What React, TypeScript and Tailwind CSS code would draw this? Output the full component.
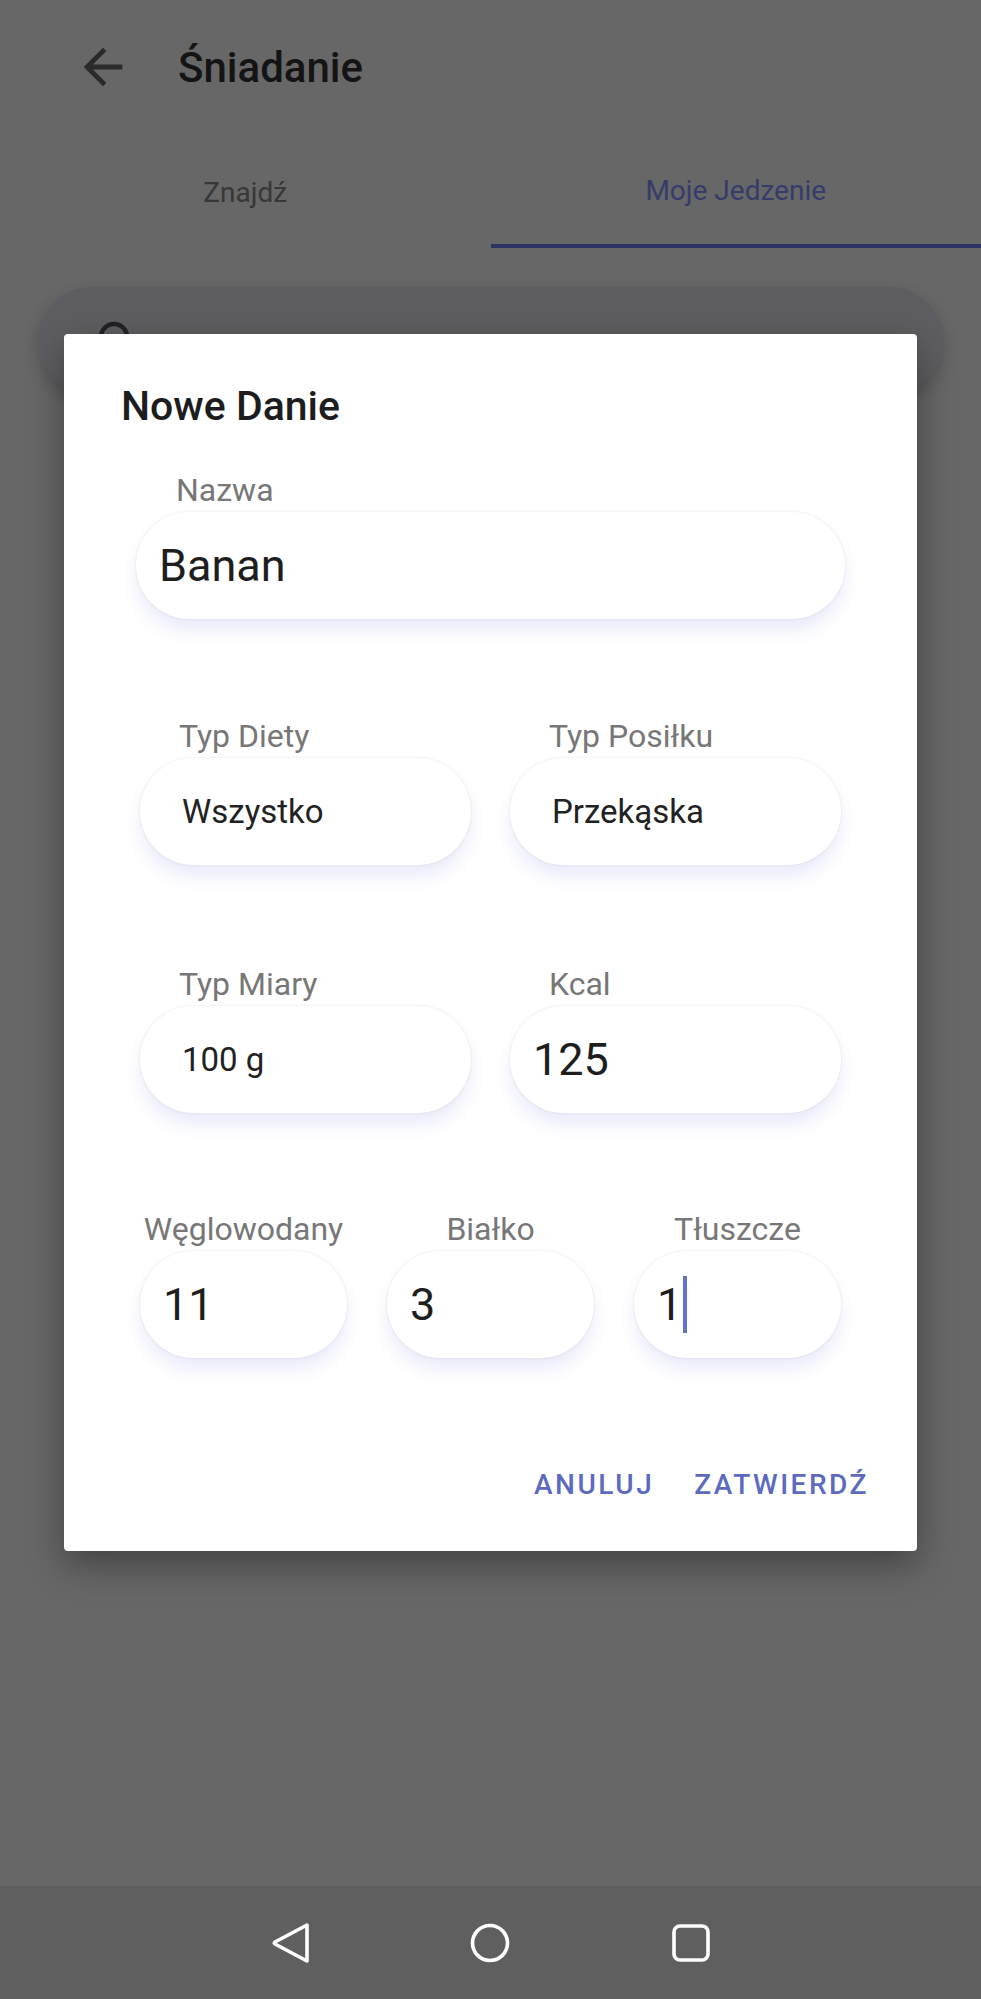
import React from "react";

const font = { fontFamily: "Roboto, 'Noto Sans', 'Liberation Sans', sans-serif" };

function Field({
    label,
    value,
    small,
    centerLabel,
    cursor,
    wide,
}: {
    label: string;
    value: string;
    small?: boolean;
    centerLabel?: boolean;
    cursor?: boolean;
    wide?: boolean;
}) {
    return (
        <div className="flex min-w-0 flex-1 flex-col">
            <div
                className={`h-[40px] text-[32px] leading-[40px] text-[#777777] ${centerLabel ? "text-center" : wide ? "pl-[40px]" : "pl-[39px]"}`}
            >
                {label}
            </div>
            <div
                className={`mt-[2px] flex h-[107px] items-center rounded-full bg-white shadow-[0_12px_16px_rgba(98,110,220,0.13),0_0_3px_rgba(0,0,0,0.09)] ${small ? "pl-[42px]" : "pl-[23px]"}`}
            >
                <span
                    className={
                        small
                            ? "text-[33px] text-[#222222]"
                            : "text-[45px] text-[#1e1e1e]"
                    }
                >
                    {value}
                </span>
                {cursor && (
                    <span className="ml-[1px] h-[57px] w-[4px] bg-[#6373c8]" />
                )}
            </div>
        </div>
    );
}

export default function App() {
    return (
        <div
            className="relative flex h-[1999px] w-[981px] flex-col overflow-hidden bg-[#676767]"
            style={font}
        >
            {/* toolbar */}
            <div className="flex h-[134px] items-center">
                <svg
                    viewBox="0 0 24 24"
                    className="ml-[74px] h-[58px] w-[58px] fill-[#2a2a2a]"
                >
                    <path d="M20 11H7.83l5.59-5.59L12 4l-8 8 8 8 1.41-1.41L7.83 13H20v-2z" />
                </svg>
                <span className="ml-[46px] text-[42px] font-medium text-[#141414]">
                    Śniadanie
                </span>
            </div>

            {/* tabs */}
            <div className="flex h-[114px]">
                <div className="flex flex-1 items-center justify-center pt-[4px] text-[28px] text-[#383838]">
                    Znajdź
                </div>
                <div className="flex flex-1 flex-col">
                    <div className="flex flex-1 items-center justify-center pt-[4px] text-[28px] text-[#363c6a]">
                        Moje Jedzenie
                    </div>
                    <div className="h-[4px] bg-[#2c3262]" />
                </div>
            </div>

            {/* search bar behind the dialog */}
            <div className="mx-[38px] mt-[39px] flex h-[108px] items-center rounded-full bg-[#5e5e62] shadow-[0_6px_16px_rgba(0,0,0,0.18)]">
                <svg
                    viewBox="0 0 24 24"
                    className="ml-[56px] h-[48px] w-[48px] fill-none stroke-[#222222] stroke-[2.2]"
                >
                    <circle cx="10" cy="10" r="6.5" />
                    <path d="M15 15l5.5 5.5" />
                </svg>
            </div>

            <div className="flex-1" />

            {/* system nav bar */}
            <div className="flex h-[113px] items-center bg-[#5f5f5f]">
                <svg viewBox="0 0 40 40" className="ml-[271px] h-[40px] w-[40px]">
                    <path
                        d="M36 2 L4 19 Q2.5 20 4 21 L36 38 Z"
                        fill="none"
                        stroke="white"
                        strokeWidth="3.6"
                        strokeLinejoin="round"
                    />
                </svg>
                <svg viewBox="0 0 40 40" className="ml-[159px] h-[40px] w-[40px]">
                    <circle cx="20" cy="20" r="17.5" fill="none" stroke="white" strokeWidth="3.6" />
                </svg>
                <svg viewBox="0 0 40 40" className="ml-[161px] h-[40px] w-[40px]">
                    <rect x="3" y="3" width="34" height="34" rx="6" fill="none" stroke="white" strokeWidth="3.6" />
                </svg>
            </div>

            {/* dialog */}
            <div className="absolute left-[64px] top-[334px] flex h-[1217px] w-[853px] flex-col rounded-[4px] bg-white shadow-[0_14px_36px_rgba(0,0,0,0.35)]">
                <div className="pl-[57px] pt-[48px] text-[41px] font-medium leading-[48px] text-[#1d1d1d]">
                    Nowe Danie
                </div>

                <div className="mt-[40px] flex px-[72px]">
                    <Field label="Nazwa" value="Banan" wide />
                </div>

                <div className="mt-[97px] flex gap-[39px] px-[76px]">
                    <Field label="Typ Diety" value="Wszystko" small />
                    <Field label="Typ Posiłku" value="Przekąska" small />
                </div>

                <div className="mt-[99px] flex gap-[39px] px-[76px]">
                    <Field label="Typ Miary" value="100 g" small />
                    <Field label="Kcal" value="125" />
                </div>

                <div className="mt-[96px] flex gap-[40px] px-[76px]">
                    <Field label="Węglowodany" value="11" centerLabel />
                    <Field label="Białko" value="3" centerLabel />
                    <Field label="Tłuszcze" value="1" centerLabel cursor />
                </div>

                <div className="mt-[107px] flex justify-end gap-[40px] pr-[48px]">
                    <span className="text-[28px] font-medium leading-[40px] tracking-[0.09em] text-[#5c6bc0]">
                        ANULUJ
                    </span>
                    <span className="text-[28px] font-medium leading-[40px] tracking-[0.09em] text-[#5c6bc0]">
                        ZATWIERDŹ
                    </span>
                </div>
            </div>
        </div>
    );
}
